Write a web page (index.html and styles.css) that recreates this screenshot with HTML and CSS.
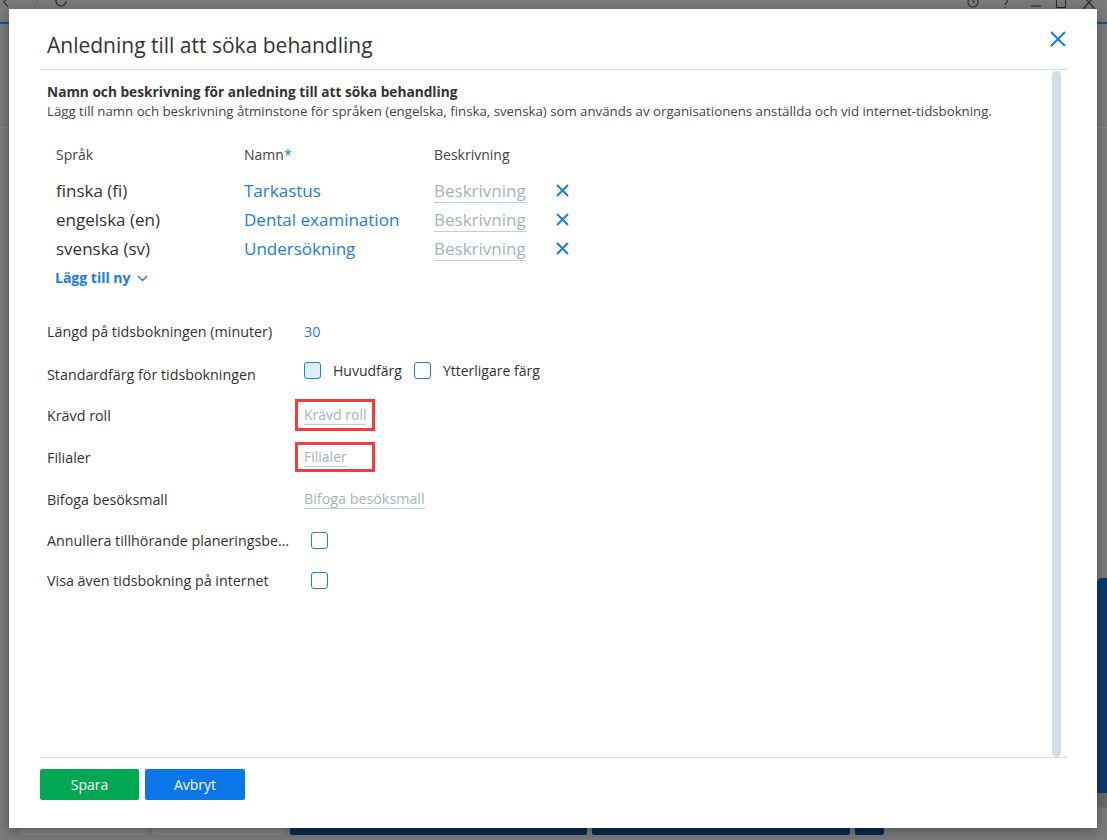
FILE: index.html
```html
<!DOCTYPE html>
<html lang="sv">
<head>
    <meta charset="UTF-8">
    <title>Anledning till att söka behandling</title>
    <link rel="stylesheet" href="styles.css">
</head>
<body>
<div class="page">
    <div class="topbar">
        <svg class="nav" width="80" height="10" viewBox="0 0 80 10">
            <path d="M8 -3L4 2L8 7" stroke="#2c2c2c" stroke-width="1.2" fill="none"/>
            <path d="M34 -3L38 2L34 7" stroke="#6c6c6c" stroke-width="1.2" fill="none"/>
            <path d="M66 1A5 5 0 1 1 61 -4" stroke="#2c2c2c" stroke-width="1.2" fill="none"/>
        </svg>
        <svg class="tools" width="140" height="10" viewBox="0 0 140 10">
            <circle cx="12" cy="2" r="5" stroke="#2c2c2c" stroke-width="1.1" fill="none"/>
            <path d="M12 -1V2H14" stroke="#2c2c2c" stroke-width="1" fill="none"/>
            <path d="M44 -2Q47 -1 46 2Q45 3 44 5M44 7V8" stroke="#2c2c2c" stroke-width="1.1" fill="none"/>
            <path d="M70 6H80" stroke="#2c2c2c" stroke-width="1.1"/>
            <rect x="95.5" y="-6.5" width="9" height="14" stroke="#2c2c2c" stroke-width="1.1" fill="none"/>
            <path d="M122 -4L134 9M134 -4L122 9" stroke="#2c2c2c" stroke-width="1.2"/>
        </svg>
    </div>
    <div class="page-body"></div>
    <div class="page-scroll"></div>
    <div class="page-actions">
        <span class="pbtn grey w1"></span>
        <span class="pbtn grey w2"></span>
        <span class="pbtn navy w3"></span>
        <span class="pbtn navy w4"></span>
        <span class="pbtn navy w5"></span>
    </div>
</div>

<div class="modal">
    <div class="modal-head">
        <h1>Anledning till att söka behandling</h1>
        <button class="close" type="button">
            <svg width="16" height="16" viewBox="0 0 16 16"><path d="M1 1L15 15M15 1L1 15" stroke="currentColor" stroke-width="2" fill="none"/></svg>
        </button>
    </div>

    <div class="modal-body">
        <div class="content">
            <h2>Namn och beskrivning för anledning till att söka behandling</h2>
            <p class="hint">Lägg till namn och beskrivning åtminstone för språken (engelska, finska, svenska) som används av organisationens anställda och vid internet-tidsbokning.</p>

            <div class="lang-table">
                <div class="lang-head">
                    <span>Språk</span>
                    <span>Namn<em>*</em></span>
                    <span>Beskrivning</span>
                </div>
                <div class="lang-row">
                    <span>finska (fi)</span>
                    <span class="name">Tarkastus</span>
                    <span><span class="placeholder">Beskrivning</span></span>
                    <span class="remove"><svg width="13" height="13" viewBox="0 0 13 13"><path d="M1 1L12 12M12 1L1 12" stroke="currentColor" stroke-width="2" fill="none"/></svg></span>
                </div>
                <div class="lang-row">
                    <span>engelska (en)</span>
                    <span class="name">Dental examination</span>
                    <span><span class="placeholder">Beskrivning</span></span>
                    <span class="remove"><svg width="13" height="13" viewBox="0 0 13 13"><path d="M1 1L12 12M12 1L1 12" stroke="currentColor" stroke-width="2" fill="none"/></svg></span>
                </div>
                <div class="lang-row">
                    <span>svenska (sv)</span>
                    <span class="name">Undersökning</span>
                    <span><span class="placeholder">Beskrivning</span></span>
                    <span class="remove"><svg width="13" height="13" viewBox="0 0 13 13"><path d="M1 1L12 12M12 1L1 12" stroke="currentColor" stroke-width="2" fill="none"/></svg></span>
                </div>
                <div class="add-new">Lägg till ny
                    <svg width="11" height="7" viewBox="0 0 11 7"><path d="M1 1L5.5 5.5L10 1" stroke="currentColor" stroke-width="1.4" fill="none"/></svg>
                </div>
            </div>

            <div class="form">
                <div class="row">
                    <label>Längd på tidsbokningen (minuter)</label>
                    <span class="value">30</span>
                </div>
                <div class="row">
                    <label class="low">Standardfärg för tidsbokningen</label>
                    <div class="colors">
                        <span class="box filled"></span><span>Huvudfärg</span>
                        <span class="box"></span><span>Ytterligare färg</span>
                    </div>
                </div>
                <div class="row">
                    <label>Krävd roll</label>
                    <span class="marked tall"><span class="placeholder">Krävd roll</span></span>
                </div>
                <div class="row">
                    <label>Filialer</label>
                    <span class="marked"><span class="placeholder">Filialer</span></span>
                </div>
                <div class="row">
                    <label>Bifoga besöksmall</label>
                    <span class="placeholder">Bifoga besöksmall</span>
                </div>
                <div class="row short">
                    <label>Annullera tillhörande planeringsbesök</label>
                    <span class="box check"></span>
                </div>
                <div class="row short">
                    <label>Visa även tidsbokning på internet</label>
                    <span class="box check"></span>
                </div>
            </div>
        </div>
        <div class="scrollbar"></div>
    </div>

    <div class="modal-foot">
        <button class="btn save" type="button">Spara</button>
        <button class="btn cancel" type="button">Avbryt</button>
    </div>
</div>
</body>
</html>
```

FILE: styles.css
```css
*{ margin:0; padding:0; box-sizing:border-box;}
body{
    width:1107px;
    height:840px;
    overflow:hidden;
    background:#7b7b7b;
    font-family:"Open Sans","Noto Sans",sans-serif;
    color:#333;
    position:relative;
}

/* dimmed page behind the dialog */
.page{
    height:840px;
    display:flex;
    flex-direction:column;
}
.topbar{
    height:24px;
    border-bottom:2px solid #1d4f86;
    display:flex;
    justify-content:space-between;
    align-items:flex-start;
}
.topbar svg{ display:block;}
.tools{ margin-right:6px;}
.page-body{
    flex:1;
    border-top:1px solid #888;
    margin-top:103px;
}
.page-scroll{
    position:absolute;
    right:0;
    top:578px;
    width:10px;
    height:230px;
    border-radius:5px 0 0 5px;
    background:linear-gradient(#0c3a70 0, #0c3a70 215px, #6a6a6a 215px);
}
.page-actions{
    position:absolute;
    left:20px;
    top:826px;
    display:flex;
    gap:5px;
}
.pbtn{
    height:9px;
    border-radius:2px;
    display:block;
}
.pbtn.grey{ background:#858585;}
.pbtn.navy{ background:#062c58;}
.w1{ width:127px;}
.w2{ width:133px;}
.w3{ width:297px;}
.w4{ width:258px;}
.w5{ width:29px;}

/* dialog */
.modal{
    position:absolute;
    left:9px;
    top:9px;
    width:1088px;
    height:819px;
    background:#fff;
    box-shadow:0 3px 12px rgba(0,0,0,.35);
    padding:0 30px 0 31px;
    display:flex;
    flex-direction:column;
}
.modal-head{
    height:61px;
    padding:21px 0 0 7px;
    border-bottom:1px solid #d3dde7;
    display:flex;
    justify-content:space-between;
}
.modal-head h1{
    font-size:21px;
    font-weight:normal;
    line-height:30px;
    color:#333;
}
.close{
    border:0;
    background:none;
    color:#1a7ce6;
    width:16px;
    height:16px;
    margin:1px 1px 0 0;
}
.close svg{ display:block;}

.modal-body{
    height:688px;
    display:flex;
    border-bottom:1px solid #d3dde7;
}
.content{
    flex:1;
    padding:12px 0 0 7px;
}
.scrollbar{
    width:9px;
    margin:1px 6px 0 0;
    border-radius:5px;
    background:#d2dce6;
}

h2{
    font-size:13.7px;
    line-height:20px;
    font-weight:bold;
    color:#333;
}
.hint{
    font-size:13.25px;
    line-height:18px;
    color:#444;
}

.lang-table{
    margin-top:25px;
    padding-left:9px;
}
.lang-head,.lang-row{
    display:grid;
    grid-template-columns:188px 190px 122px 20px;
    align-items:center;
}
.lang-head{
    font-size:14px;
    line-height:20px;
    color:#444;
    margin-bottom:11px;
}
.lang-head em{
    font-style:normal;
    color:#1a7ce6;
}
.lang-row{
    height:29px;
    font-size:17px;
    color:#333;
}
.lang-row .name{ color:#1a7ce6;}
.remove{
    color:#1a7ce6;
    display:flex;
}
.add-new{
    margin:5px 0 0 -1px;
    font-size:14px;
    line-height:20px;
    font-weight:bold;
    color:#1a7ce6;
    display:flex;
    align-items:center;
    gap:6px;
}

.placeholder{
    color:#a6b2c2;
    border-bottom:1px solid #c3cedb;
}

.form{ margin-top:22px;}
.row{
    height:42px;
    display:flex;
    align-items:center;
    font-size:14.3px;
}
.row.short{ height:40px;}
.row label{
    width:257px;
    flex:none;
    padding-right:8px;
    white-space:nowrap;
    overflow:hidden;
    text-overflow:ellipsis;
    color:#333;
}
.row label.low{ padding-top:3px;}
.value{ color:#1a7ce6;}
.colors{
    display:flex;
    align-items:center;
    gap:12px;
    margin-top:-5px;
    font-size:14px;
}
.box{
    width:17px;
    height:17px;
    border:1.5px solid #1f7fe2;
    border-radius:3px;
    display:block;
    flex:none;
}
.box.filled{ background:#ddeef6;}
.box.check{ margin-left:7px;}
.marked{
    width:80px;
    height:30px;
    margin-left:-9px;
    border:3px solid #f23c3f;
    padding:2px 6px 0;
    display:block;
    font-size:14px;
    white-space:nowrap;
}
.marked.tall{ height:32px; padding-top:3px;}

.modal-foot{
    padding-top:11px;
    display:flex;
    gap:6px;
}
.btn{
    width:99px;
    height:31px;
    border:0;
    border-radius:2px;
    color:#fff;
    font-family:inherit;
    font-size:14px;
}
.btn.save{ background:#00a853;}
.btn.cancel{ background:#0a76e8; width:100px;}
```
